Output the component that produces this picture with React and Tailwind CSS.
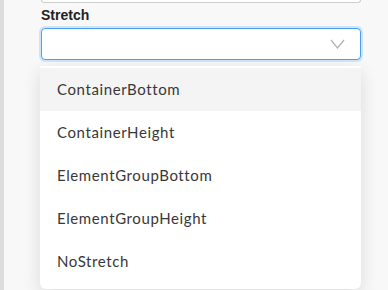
export default function App() {
  const options = [
    'ContainerBottom',
    'ContainerHeight',
    'ElementGroupBottom',
    'ElementGroupHeight',
    'NoStretch',
  ]

  return (
    <div className="w-[388px] h-[290px] bg-[#f8f8f8] flex overflow-hidden">
      {/* left edge strip */}
      <div className="w-[4px] h-full bg-[#dcdcdc]" />

      <div className="flex flex-col pl-[37px] w-[325px]">
        {/* previous input, only bottom visible */}
        <div className="h-[3px] w-[320px] bg-white border border-t-0 border-[#cfcfcf] rounded-b-[4px]" />

        <label className="mt-[2px] text-[14px] leading-[20px] font-bold text-[#222] font-['Liberation_Sans',sans-serif]">
          Stretch
        </label>

        {/* select */}
        <div className="mt-[3px] w-[320px] h-[32px] bg-white border border-[#4a9ff5] rounded-[4px] ring-2 ring-[#cfe5fd] flex items-center justify-end pr-[15px]">
          <svg width="15" height="10" viewBox="0 0 15 10" fill="none">
            <polyline points="1,1 7.5,9 14,1" stroke="#b3b3b3" strokeWidth="1.3" />
          </svg>
        </div>

        {/* dropdown menu */}
        <div className="mt-[6px] -ml-[1px] w-[321px] bg-white rounded-b-[6px] pt-[2px] pb-[6px] shadow-[0_6px_18px_rgba(0,0,0,0.12)] font-['Lato',sans-serif]">
          {options.map((o, i) => (
            <div
              key={o}
              className={`h-[43px] flex items-center pl-[17px] text-[15px] tracking-[0.6px] text-[#383838] ${i === 0 ? 'bg-[#f4f4f4]' : ''}`}
            >
              {o}
            </div>
          ))}
        </div>
      </div>
    </div>
  )
}
